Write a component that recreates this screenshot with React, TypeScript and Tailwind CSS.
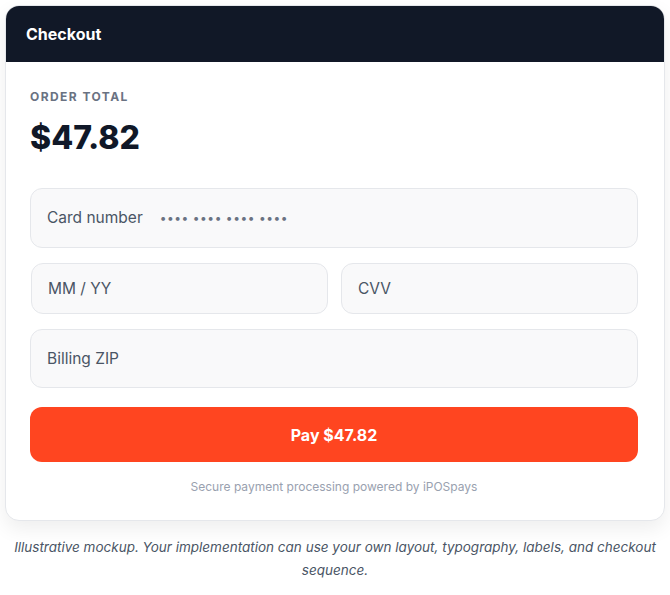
export default function App() {
  return (
    <div className="min-h-screen bg-white p-[5px]" style={{ fontFamily: "Inter, 'Noto Sans', sans-serif" }}>
      <div className="overflow-hidden rounded-[14px] border border-gray-200 bg-white shadow-[0_8px_20px_rgba(0,0,0,0.07)]">
        <div className="bg-[#111827] px-5 py-[17px]">
          <h1 className="text-[16px] font-bold leading-[22px] text-white">Checkout</h1>
        </div>
        <div className="pb-[24px] pl-6 pr-[26px] pt-[27px]">
          <p className="text-[12px] font-bold uppercase leading-4 tracking-[0.12em] text-gray-500">Order total</p>
          <p className="mt-[13px] text-[32px] font-extrabold leading-[40px] text-gray-900">$47.82</p>

          <div className="mt-[30px] flex flex-col gap-[15px]">
            <div className="flex h-[60px] items-center gap-[17px] rounded-xl border border-gray-200 bg-[#f9f9fa] px-4">
              <span className="text-[15.5px] text-gray-600">Card number</span>
              <span className="text-[12px] tracking-[0.045em] text-gray-500">•••• •••• •••• ••••</span>
            </div>
            <div className="flex gap-[13px] pl-px">
              <div className="flex h-[51px] flex-1 items-center rounded-xl border border-gray-200 bg-[#f9f9fa] px-4">
                <span className="text-[15.5px] text-gray-600">MM / YY</span>
              </div>
              <div className="flex h-[51px] flex-1 items-center rounded-xl border border-gray-200 bg-[#f9f9fa] px-4">
                <span className="text-[15.5px] text-gray-600">CVV</span>
              </div>
            </div>
            <div className="flex h-[59px] items-center rounded-xl border border-gray-200 bg-[#f9f9fa] px-4">
              <span className="text-[15.5px] text-gray-600">Billing ZIP</span>
            </div>
          </div>

          <button className="mt-[19px] flex h-[55px] w-full items-center justify-center rounded-xl bg-[#ff4520] text-[16px] font-bold text-white">
            Pay $47.82
          </button>
          <p className="mt-[16px] text-center text-[12px] text-gray-400">Secure payment processing powered by iPOSpays</p>
        </div>
      </div>
      <p className="mt-[15px] text-center text-[13.5px] italic leading-[23px] text-gray-600">
        Illustrative mockup. Your implementation can use your own layout, typography, labels, and checkout sequence.
      </p>
    </div>
  );
}
